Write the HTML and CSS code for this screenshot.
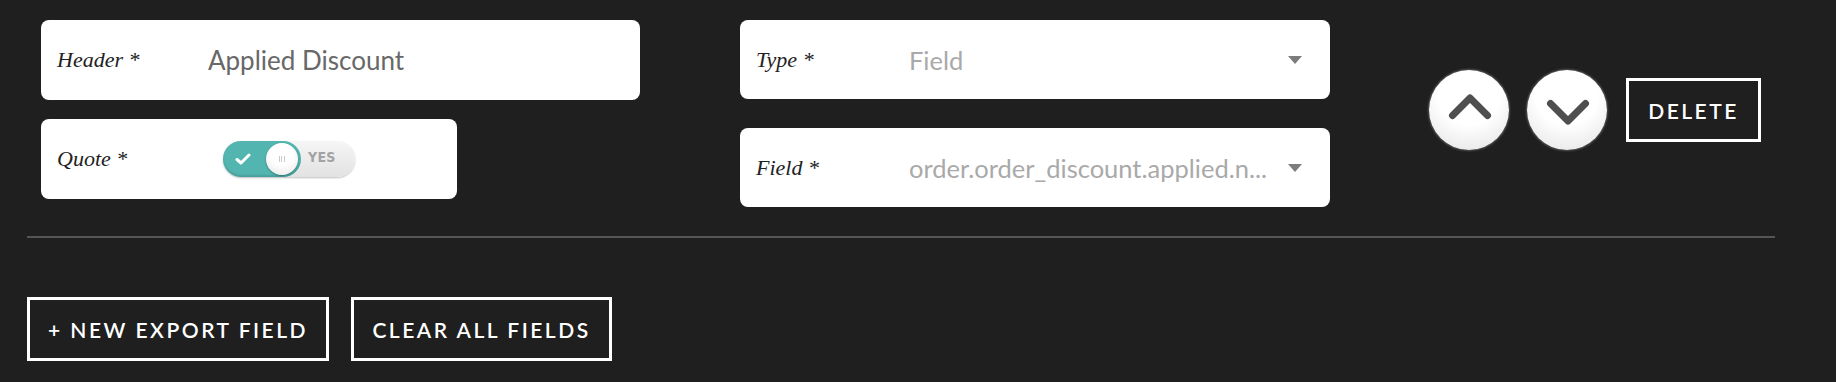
FILE: index.html
```html
<!DOCTYPE html>
<html>
<head>
<meta charset="utf-8">
<link rel="stylesheet" href="styles.css">
</head>
<body>
<div class="page">
  <div class="row">
    <div class="col col-left">
      <div class="card card-wide">
        <span class="label">Header *</span>
        <span class="value">Applied Discount</span>
      </div>
      <div class="card card-narrow">
        <span class="label">Quote *</span>
        <div class="toggle">
          <div class="toggle-on">
            <svg class="check" width="16" height="12" viewBox="0 0 16 12"><polyline points="2,6.5 6,10 14,2" fill="none" stroke="#fff" stroke-width="3" stroke-linecap="round" stroke-linejoin="round"/></svg>
          </div>
          <div class="knob"><span class="grip"></span></div>
          <span class="yes">YES</span>
        </div>
      </div>
    </div>
    <div class="col col-mid">
      <div class="card">
        <span class="label">Type *</span>
        <span class="value select">Field</span>
        <span class="caret"></span>
      </div>
      <div class="card">
        <span class="label">Field *</span>
        <span class="value select">order.order_discount.applied.n...</span>
        <span class="caret"></span>
      </div>
    </div>
    <div class="actions">
      <button class="circle">
        <svg width="80" height="80" viewBox="0 0 80 80"><polyline points="23.5,45.5 41,28 58.5,45.5" fill="none" stroke="#4f4f4f" stroke-width="7" stroke-linecap="round" stroke-linejoin="round"/></svg>
      </button>
      <button class="circle">
        <svg width="80" height="80" viewBox="0 0 80 80"><polyline points="23.5,33.5 41,51 58.5,33.5" fill="none" stroke="#4f4f4f" stroke-width="7" stroke-linecap="round" stroke-linejoin="round"/></svg>
      </button>
      <button class="btn btn-delete">DELETE</button>
    </div>
  </div>
  <div class="divider"></div>
  <div class="bottom">
    <button class="btn btn-new">+ NEW EXPORT FIELD</button>
    <button class="btn btn-clear">CLEAR ALL FIELDS</button>
  </div>
</div>
</body>
</html>
```
FILE: styles.css
```css
html, body {
  margin: 0;
  padding: 0;
  background: #1f1f1f;
}
.page {
  padding: 20px 0 0 27px;
  width: 1748px;
}
.row {
  display: flex;
  padding-left: 14px;
}
.col {
  display: flex;
  flex-direction: column;
}
.col-left {
  width: 599px;
  gap: 19px;
}
.col-mid {
  width: 590px;
  margin-left: 100px;
  gap: 29px;
}
.card {
  background: #fff;
  border-radius: 8px;
  height: 79px;
  display: flex;
  align-items: center;
  padding: 0 16px;
  box-sizing: border-box;
}
.card-wide { width: 599px; height: 80px; }
.card-narrow { width: 416px; height: 80px; }
.label {
  font-family: "Liberation Serif", serif;
  font-style: italic;
  font-size: 22px;
  color: #222;
  width: 151px;
  flex: none;
}
.value {
  font-family: Lato, "Liberation Sans", sans-serif;
  font-size: 26px;
  color: #686868;
  white-space: nowrap;
}
.value.select {
  color: #a9a9a9;
  padding-left: 2px;
  font-size: 25.5px;
}
.caret {
  margin-left: auto;
  width: 0;
  height: 0;
  border-left: 7px solid transparent;
  border-right: 7px solid transparent;
  border-top: 8px solid #7c7c7c;
  margin-right: 12px;
  flex: none;
}
.toggle {
  position: relative;
  width: 132px;
  height: 36px;
  border-radius: 18px;
  background: linear-gradient(#f6f6f6, #e2e2e2);
  box-shadow: 0 1px 2px rgba(0,0,0,0.25);
  margin-left: 15px;
}
.toggle-on {
  position: absolute;
  left: 0;
  top: 0;
  width: 78px;
  height: 36px;
  border-radius: 18px;
  background: #52b5b0;
  box-shadow: inset 0 -2px 2px rgba(0,0,0,0.12);
}
.check {
  position: absolute;
  left: 12px;
  top: 12px;
}
.knob {
  position: absolute;
  left: 43px;
  top: 2px;
  width: 32px;
  height: 32px;
  border-radius: 50%;
  background: radial-gradient(circle at 50% 35%, #ffffff 40%, #e6e6e6 100%);
  box-shadow: 0 1px 2px rgba(0,0,0,0.3);
}
.grip {
  position: absolute;
  left: 13px;
  top: 13px;
  width: 6px;
  height: 6px;
  background: repeating-linear-gradient(90deg, #c9c9c9 0 1px, transparent 1px 2.5px);
}
.yes {
  position: absolute;
  left: 85px;
  top: 8px;
  font-family: "DejaVu Sans Condensed", "DejaVu Sans", sans-serif;
  font-weight: bold;
  font-size: 14px;
  color: #a3a3a3;
  letter-spacing: 0.3px;
}
.actions {
  display: flex;
  align-items: center;
  margin-left: 99px;
  margin-top: 50px;
  align-self: flex-start;
}
.circle {
  width: 80px;
  height: 80px;
  border-radius: 50%;
  border: none;
  padding: 0;
  background: radial-gradient(circle at 50% 30%, #ffffff 45%, #ececec 80%, #d9d9d9 100%);
  box-shadow: 0 0 2px 1px rgba(255,255,255,0.25);
  margin-right: 18px;
  display: flex;
}
.circle svg { display: block; }
.circle:nth-child(2) { margin-right: 19px; }
.btn {
  background: transparent;
  border: 3px solid #fff;
  color: #fff;
  font-family: Lato, "Liberation Sans", sans-serif;
  font-weight: 600;
  font-size: 21px;
  letter-spacing: 2.5px;
  height: 64px;
  padding: 0;
  box-sizing: border-box;
  text-align: center;
}
.btn-delete { width: 135px; }
.divider {
  margin-top: 29px;
  height: 2px;
  background: #555;
  width: 1748px;
}
.bottom {
  display: flex;
  gap: 22px;
  margin-top: 59px;
}
.btn-new { width: 302px; }
.btn-clear { width: 261px; }
```
